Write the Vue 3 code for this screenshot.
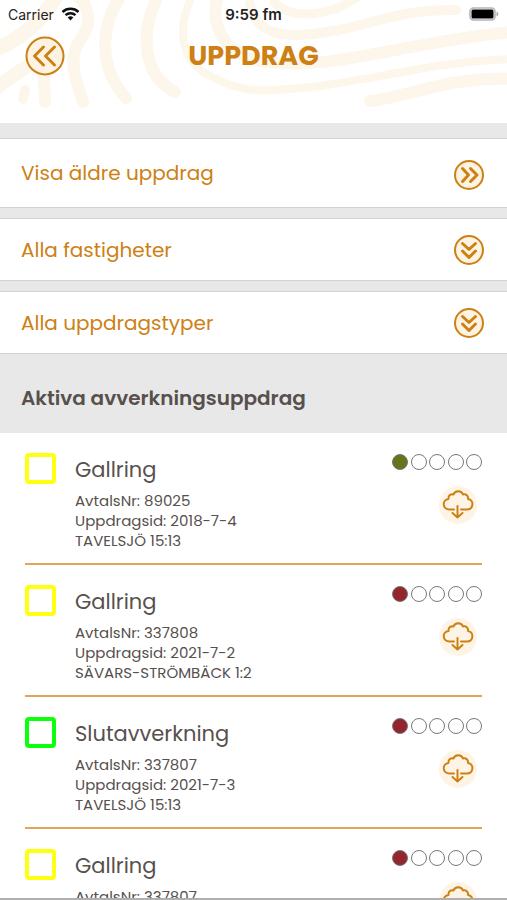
<template>
  <div class="screen">
    <header class="top">
      <svg class="pattern" viewBox="0 0 507 123" preserveAspectRatio="xMidYMin slice" aria-hidden="true">
        <g fill="none" stroke="#fdf6eb" stroke-width="12" stroke-linecap="round">
          <path d="M-6 50C18 40 42 24 58 -8" stroke-width="15" />
          <path d="M-6 90C10 76 28 68 40 56" stroke-width="14" />
          <path d="M76 -6C92 10 92 24 80 40C66 62 78 84 83 102" />
          <path d="M25 90L23 99" stroke-width="10" />
          <path d="M44 76L45 102" />
          <path d="M122 -6C98 28 100 70 126 98" />
          <path d="M159 -6C138 34 144 76 175 92" />
          <path d="M192 -4C176 30 180 62 214 78C232 88 250 91 270 90C350 88 420 62 512 59" stroke-width="8" />
          <path d="M218 -4C210 22 222 50 254 60C330 74 400 42 512 32" />
          <path d="M250 4C254 26 270 36 296 35C360 33 390 8 456 10" stroke-width="10" />
          <path d="M274 2C290 20 330 18 362 -6" stroke-width="9" />
          <path d="M370 101C412 96 450 76 512 79" />
        </g>
      </svg>
      <div class="status-bar">
        <div class="carrier">
          <span>Carrier</span>
          <svg class="wifi" viewBox="0 0 18 14" aria-hidden="true">
            <g fill="none" stroke="#111" stroke-width="2.5">
              <path d="M1 5C5.500 .8 12.500 .8 17 5" />
              <path d="M4 8.200C6.800 5.600 11.200 5.600 14 8.200" />
            </g>
            <path d="M6.200 10.400C7.800 9 10.200 9 11.800 10.400L9 13.400Z" fill="#111" />
          </svg>
        </div>
        <span class="clock">9:59 fm</span>
        <svg class="battery" viewBox="0 0 30 14" aria-hidden="true">
          <rect x="1" y="1" width="25" height="12" rx="3.500" fill="#fff" stroke="#b4b4b4" stroke-width="1.600" />
          <rect x="2.500" y="2.500" width="22" height="9" rx="1.500" fill="#000" />
          <path d="M27.500 4.500C30 5.500 30 8.500 27.500 9.500Z" fill="#aaa" />
        </svg>
      </div>
      <div class="title-bar">
        <button class="round-btn back" type="button" aria-label="Tillbaka">
          <svg viewBox="0 0 40 40" aria-hidden="true">
            <circle cx="20" cy="20" r="18.500" />
            <path d="M18.500 11L9.500 20L18.500 29M29.500 11L20.500 20L29.500 29" />
          </svg>
        </button>
        <h1>UPPDRAG</h1>
      </div>
    </header>

    <nav class="filters">
      <button
        v-for="filter in filters"
        :key="filter.label"
        class="filter"
        :class="filter.direction"
        type="button"
      >
        <span>{{ filter.label }}</span>
        <svg class="filter-icon" viewBox="0 0 30 30" aria-hidden="true">
          <circle cx="15" cy="15" r="14" />
          <path v-if="filter.direction === 'right'" d="M8.500 8.500L14.500 15L8.500 21.500M16.500 8.500L23 15L16.500 21.500" />
          <path v-else d="M8.500 8.500L15 14.500L21.500 8.500M8.500 16L15 22.500L21.500 16" />
        </svg>
      </button>
    </nav>

    <h2>Aktiva avverkningsuppdrag</h2>

    <ul class="jobs">
      <li v-for="(job, index) in jobs" :key="index" class="job">
        <input v-model="job.checked" type="checkbox" class="mark" :class="job.color" :aria-label="job.type" />
        <div class="info">
          <h3>{{ job.type }}</h3>
          <p>AvtalsNr: {{ job.contract }}</p>
          <p>Uppdragsid: {{ job.id }}</p>
          <p>{{ job.place }}</p>
        </div>
        <div class="side">
          <div class="steps">
            <span v-for="n in 5" :key="n" class="step" :class="n === 1 ? job.state : ''"></span>
          </div>
          <button class="download" type="button" aria-label="Ladda ner">
            <svg viewBox="0 0 38 38" aria-hidden="true">
              <path d="M15 23.500H10.500C3.500 23.500 2.500 14 9.500 13C9 9 12.500 7.500 14.500 8.500C16 4 22.500 4 24 8.500C27 7.500 29.500 10 29 13C35.500 14 34.500 23.500 28 23.500H22" />
              <path d="M18.500 20V31.500M13.500 27L18.500 31.500L23.500 27" />
            </svg>
          </button>
        </div>
      </li>
    </ul>
  </div>
</template>

<script setup>
import { ref } from 'vue'

const filters = [
  { label: 'Visa äldre uppdrag', direction: 'right' },
  { label: 'Alla fastigheter', direction: 'down' },
  { label: 'Alla uppdragstyper', direction: 'down' }
]

const jobs = ref([
  { type: 'Gallring', contract: '89025', id: '2018-7-4', place: 'TAVELSJÖ 15:13', color: 'yellow', state: 'done', checked: false },
  { type: 'Gallring', contract: '337808', id: '2021-7-2', place: 'SÄVARS-STRÖMBÄCK 1:2', color: 'yellow', state: 'stopped', checked: false },
  { type: 'Slutavverkning', contract: '337807', id: '2021-7-3', place: 'TAVELSJÖ 15:13', color: 'green', state: 'stopped', checked: false },
  { type: 'Gallring', contract: '337807', id: '2021-7-3', place: 'TAVELSJÖ 15:13', color: 'yellow', state: 'stopped', checked: false }
])
</script>

<style>
body {
  margin: 0;
  background: #fff;
}
</style>

<style scoped>
.screen {
  display: flex;
  flex-direction: column;
  height: 100vh;
  box-sizing: border-box;
  border-bottom: 2px solid #b0b0b0;
  overflow: hidden;
  background: #fff;
  color: #57504d;
  font-family: Poppins, Inter, sans-serif;
}

h1, h2, h3, p, ul {
  margin: 0;
  padding: 0;
}

button {
  font: inherit;
  cursor: pointer;
}

.top {
  position: relative;
  flex-shrink: 0;
  height: 123px;
}

.pattern {
  position: absolute;
  inset: 0;
  width: 100%;
  height: 100%;
}

.status-bar {
  position: relative;
  display: grid;
  grid-template-columns: 1fr auto 1fr;
  align-items: center;
  height: 28px;
  padding: 0 8px;
  color: #222;
  font-family: Inter, sans-serif;
  font-size: 14px;
}

.carrier {
  display: flex;
  align-items: center;
  gap: 7px;
}

.wifi {
  width: 19px;
  height: 14px;
}

.clock {
  font-size: 15px;
  font-weight: 600;
}

.battery {
  justify-self: end;
  width: 30px;
  height: 14px;
}

.title-bar {
  position: relative;
  display: grid;
  grid-template-columns: 40px 1fr 40px;
  align-items: center;
  padding: 8px 25px;
}

.round-btn {
  width: 40px;
  height: 40px;
  padding: 0;
  border: 0;
  background: none;
}

.round-btn svg {
  display: block;
}

.round-btn circle,
.filter-icon circle {
  fill: #fdf3e2;
  stroke: #cd8014;
  stroke-width: 2;
}

.round-btn path,
.filter-icon path {
  fill: none;
  stroke: #cd8014;
  stroke-width: 3;
  stroke-linecap: round;
  stroke-linejoin: round;
}

h1 {
  color: #cd8014;
  font-size: 27px;
  font-weight: 700;
  line-height: 40px;
  text-align: center;
}

.filters {
  display: flex;
  flex-direction: column;
  flex-shrink: 0;
  gap: 10px;
  padding-top: 15px;
  background: #e8e8e8;
}

.filter {
  display: flex;
  align-items: center;
  justify-content: space-between;
  height: 63px;
  padding: 0 23px 0 21px;
  border: solid #d2d2d2;
  border-width: 1px 0;
  background: #fff;
  color: #cd8014;
  font-size: 20px;
  text-align: left;
}

.filter.right {
  height: 70px;
}

.filter-icon {
  width: 30px;
  height: 30px;
}

.filter.right .filter-icon {
  margin-top: 4px;
}

h2 {
  flex-shrink: 0;
  padding: 29px 21px 20px;
  background: #e8e8e8;
  font-size: 20px;
  font-weight: 600;
  line-height: 30px;
}

.jobs {
  flex: 1;
  min-height: 0;
  padding: 0 25px;
  list-style: none;
  overflow-y: auto;
  scrollbar-width: none;
}

.job {
  display: flex;
  align-items: flex-start;
  box-sizing: border-box;
  height: 132px;
  padding-top: 20px;
  border-bottom: 2px solid #dfa65a;
}

.mark {
  appearance: none;
  flex-shrink: 0;
  width: 31px;
  height: 31px;
  margin: 0;
  border: 4px solid;
  border-radius: 4px;
}

.mark.yellow {
  border-color: #ffff14;
}

.mark.green {
  border-color: #0cff0c;
}

.mark.yellow:checked {
  background: #ffff14;
}

.mark.green:checked {
  background: #0cff0c;
}

.info {
  flex: 1;
  padding-left: 19px;
}

h3 {
  margin-bottom: 4px;
  font-size: 21px;
  font-weight: 400;
  line-height: 34px;
}

.info p {
  font-size: 15px;
  line-height: 20px;
}

.side {
  display: flex;
  flex-direction: column;
  align-items: flex-end;
  gap: 16px;
  padding-top: 1px;
}

.steps {
  display: flex;
  justify-content: space-between;
  width: 90px;
}

.step {
  box-sizing: border-box;
  width: 16px;
  height: 16px;
  border: 1px solid #777;
  border-radius: 50%;
}

.step.done {
  background: #66741c;
}

.step.stopped {
  background: #93252d;
}

.download {
  width: 38px;
  height: 38px;
  margin-right: 5px;
  padding: 0;
  border: 0;
  border-radius: 50%;
  background: #fef4e5;
}

.download svg {
  display: block;
}

.download path {
  fill: none;
  stroke: #cd8014;
  stroke-width: 2;
  stroke-linecap: round;
  stroke-linejoin: round;
}
</style>
